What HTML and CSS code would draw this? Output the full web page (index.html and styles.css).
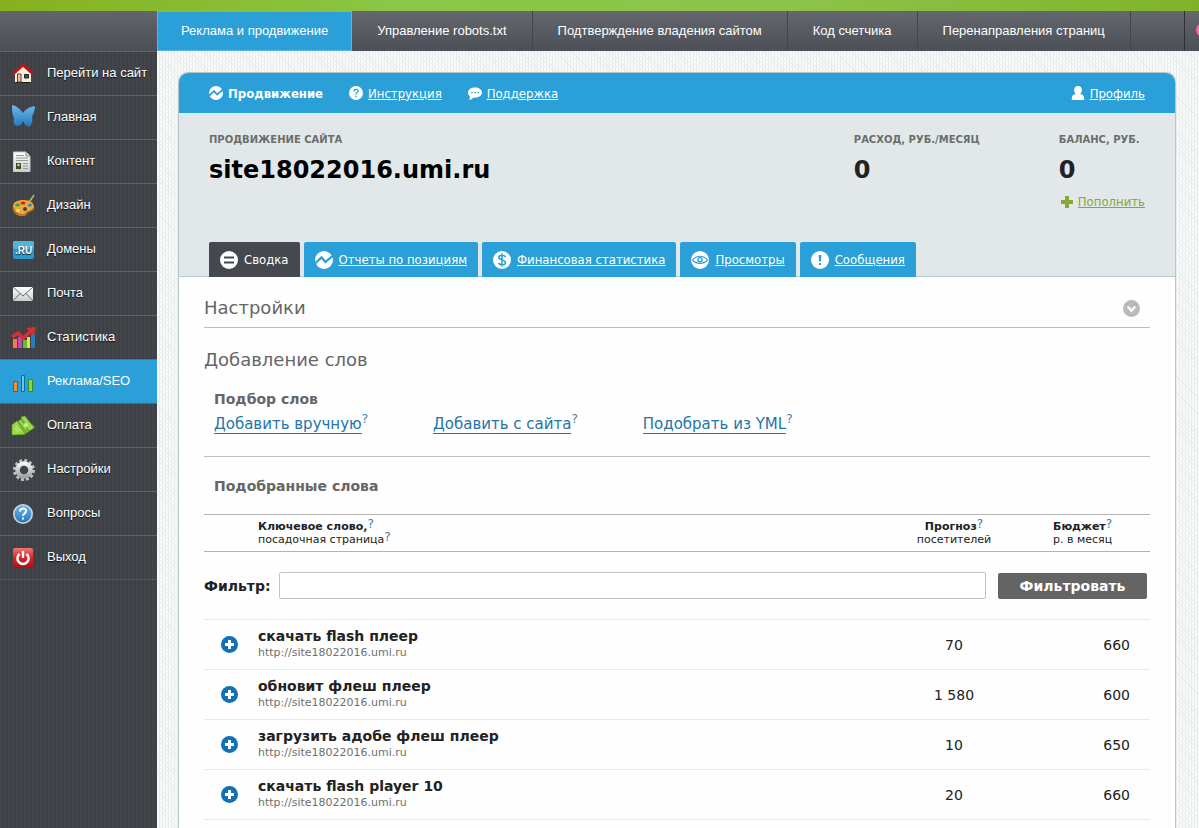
FILE: index.html
```html
<!DOCTYPE html>
<html lang="ru">
<head>
<meta charset="utf-8">
<title>Реклама и продвижение</title>
<link rel="stylesheet" href="styles.css">
</head>
<body>
<svg class="defs" aria-hidden="true">
  <defs>
    <linearGradient id="sky" x1="0" y1="0" x2="0" y2="1"><stop offset="0" stop-color="#6db9ee"/><stop offset="1" stop-color="#2277b8"/></linearGradient>
    <linearGradient id="paper" x1="0" y1="0" x2="0" y2="1"><stop offset="0" stop-color="#ffffff"/><stop offset="1" stop-color="#c9cfca"/></linearGradient>
    <linearGradient id="steel" x1="0" y1="0" x2="0" y2="1"><stop offset="0" stop-color="#f4f4f4"/><stop offset="1" stop-color="#a0a3a5"/></linearGradient>
    <linearGradient id="red" x1="0" y1="0" x2="0" y2="1"><stop offset="0" stop-color="#ee7773"/><stop offset="0.5" stop-color="#d62426"/><stop offset="1" stop-color="#b50d12"/></linearGradient>
    <symbol id="trend" viewBox="0 0 18 18"><circle cx="9" cy="9" r="9" fill="#fff"/><path d="M0 12.500 6.500 6.500 10.500 11 18 4.500" fill="none" stroke="#2a9fd8" stroke-width="2.300"/></symbol>
  </defs>
</svg>
<div class="strip"></div>
<div class="shell">
  <nav class="side" aria-label="Разделы">
    <div class="side-top"></div>
    <a href="#" class="side-link"><svg viewBox="0 0 24 24"><path d="M4 12v9h16v-9l-8-7z" fill="#f6efdc"/><path d="M5 21.500h14" stroke="#15181a" stroke-width="1"/><path d="M2 13 12 4l10 9" fill="none" stroke="#be151d" stroke-width="3"/><path d="M6.500 13h3.500v8H6.500z" fill="#e8c49d" stroke="#6a3c28"/><path d="M13.500 13.500h4v3.500h-4z" fill="#2c5a82" stroke="#222"/></svg>Перейти на сайт</a>
    <a href="#" class="side-link"><svg viewBox="0 0 24 24"><path d="M1 0c5 1 8 4 11 8 3-4 6-6 12-7 0 5-2 8-3 11 1 3 0 6-1 8-1 2-3 2-4 1-2-1-3-3-4-5-1 3-3 5-5 5-4 0-5-3-4-8C1 9 1 5 1 0z" fill="url(#sky)"/></svg>Главная</a>
    <a href="#" class="side-link"><svg viewBox="0 0 24 24"><path d="M2.500 3H15l4 4v15.500H2.500z" fill="url(#paper)" stroke="#ccc"/><path d="M15 3v4h4" fill="#ddd" stroke="#888"/><path d="M5 6.500h8M5 9h12M5 11.500h12M12 14.500h5M12 17h5M12 19.500h5" stroke="#9b9b9b"/><path d="M5 14h5v6H5z" fill="#3e4d22"/><circle cx="7.500" cy="16" r="1.300" fill="#d5c48a"/></svg>Контент</a>
    <a href="#" class="side-link"><svg viewBox="0 0 24 24"><path d="M13 7c6 0 10 3 10 7s-4 4-6 5 0 4-6 4C5 23 2 19 2 14s4-7 11-7z" fill="#eea83f"/><path d="M2 14c1 5 4 8 9 8 4 0 4-2 6-3s5-1 6-4" fill="none" stroke="#b8691b" stroke-width="1.500"/><ellipse cx="6.500" cy="12" rx="2.500" ry="1.600" fill="#3da639"/><ellipse cx="12" cy="10" rx="2.500" ry="1.500" fill="#c42d1c"/><ellipse cx="18.500" cy="12" rx="2.300" ry="1.500" fill="#2f7fb8"/><ellipse cx="7" cy="17.500" rx="2.200" ry="1.600" fill="#f9dd55"/><circle cx="14" cy="16" r="2" fill="#45464a"/><path d="m15 14 8-12" stroke="#cfae68" stroke-width="1.500"/></svg>Дизайн</a>
    <a href="#" class="side-link"><svg viewBox="0 0 24 24"><rect x="2" y="4" width="21" height="18" rx="2" fill="#2c98cb"/><rect x="2" y="4" width="21" height="8" rx="2" fill="#55b4dc"/><text x="12.500" y="17" text-anchor="middle" class="ru">.RU</text></svg>Домены</a>
    <a href="#" class="side-link"><svg viewBox="0 0 24 24"><path d="M2 6h20v14H2z" fill="url(#paper)"/><path d="m2 6 10 9L22 6M2 20l7.500-8M22 20l-7.500-8" fill="none" stroke="#62716e" stroke-width="1"/></svg>Почта</a>
    <a href="#" class="side-link"><svg viewBox="0 0 24 24"><path d="M2 14h4v9H2z" fill="#ef8140"/><path d="M7 12h4v11H7z" fill="#cc43bb"/><path d="M12 15h4v8h-4z" fill="#62bf37"/><path d="M16 12h3v11h-3z" fill="#f4da47"/><path d="M20 9h4v14h-4z" fill="#247fb7"/><path d="m1 12 6-4 5 5 8-7" fill="none" stroke="#dc2d32" stroke-width="3.500"/><path d="m15 3 10-1-2 9z" fill="#dc2d32"/></svg>Статистика</a>
    <a href="#" class="side-link active" aria-current="page"><svg viewBox="0 0 24 24"><path d="M2.500 12.500h4v10h-4z" fill="#f48d2f" stroke="#944d1c"/><path d="M10.500 6.500h3v16h-3z" fill="#5fc8f2" stroke="#156796"/><path d="M17.500 10.500h4v12h-4z" fill="#85d943" stroke="#3b8922"/></svg>Реклама/SEO</a>
    <a href="#" class="side-link"><svg viewBox="0 0 24 24"><path d="m1 12 12-8 11 10-11 8H1z" fill="#75b929"/><path d="m1 12 5-4 8 13-13 1zM10 4l4-1 9 12-5 3z" fill="#9bd94c" stroke="#5f9d22" stroke-width=".7"/><circle cx="15" cy="12" r="2" fill="#c9f38c"/><path d="m5 13 4 5M4 15l3 4M9 8l6 8" stroke="#d0ef9a"/></svg>Оплата</a>
    <a href="#" class="side-link"><svg viewBox="0 0 24 24"><circle cx="13" cy="13" r="9.500" fill="none" stroke="#bfc1c2" stroke-width="3" stroke-dasharray="2.900 2.070"/><circle cx="13" cy="13" r="6.500" fill="none" stroke="url(#steel)" stroke-width="4.500"/></svg>Настройки</a>
    <a href="#" class="side-link"><svg viewBox="0 0 24 24"><circle cx="12" cy="13" r="9.200" fill="url(#sky)" stroke="#c9d6df" stroke-width="1.600"/><path d="M9 10.500c0-4 6-4 6-.5 0 2.500-3 2.200-3 5M12 16.500v2" fill="none" stroke="#fff" stroke-width="2"/></svg>Вопросы</a>
    <a href="#" class="side-link"><svg viewBox="0 0 24 24"><rect x="2" y="3" width="20" height="20" rx="2" fill="url(#red)"/><path d="M8.500 9a5.600 5.600 0 1 0 7 0M12 6v7" fill="none" stroke="#fff" stroke-width="2.400"/></svg>Выход</a>
  </nav>
  <div class="page">
    <nav class="top" aria-label="Модули">
      <a href="#" class="top-link active" aria-current="page">Реклама и продвижение</a>
      <a href="#" class="top-link">Управление robots.txt</a>
      <a href="#" class="top-link">Подтверждение владения сайтом</a>
      <a href="#" class="top-link">Код счетчика</a>
      <a href="#" class="top-link">Перенаправления страниц</a>
      <span class="top-rest"></span>
      <span class="top-end"><i></i></span>
    </nav>
    <main class="card">
      <header class="bar">
        <strong><svg viewBox="0 0 18 18"><use href="#trend"/></svg>Продвижение</strong>
        <a href="#"><svg viewBox="0 0 18 18"><circle cx="9" cy="9" r="9" fill="#fff"/><path d="M6.500 7c0-3.500 5.200-3.500 5.200-.5 0 2-2.700 2-2.700 4.500M9 12.500v2" fill="none" stroke="#2a9fd8" stroke-width="1.700"/></svg><span>Инструкция</span></a>
        <a href="#"><svg viewBox="0 0 18 18"><path d="M9 2c5 0 9 2.700 9 6.500S14 15 9 15l-2-.2C5 17 3 18 1 17.500c1-1 1.500-2.500 1.500-4C1 12.300 0 10.500 0 8.500 0 4.700 4 2 9 2z" fill="#fff"/><path d="M4 8.500h2m2 0h2m2 0h2" stroke="#2a9fd8" stroke-width="1.800"/></svg><span>Поддержка</span></a>
        <a href="#" class="profile"><svg viewBox="0 0 18 18"><path d="M9 0c3 0 5 2 5 5 0 2-1 4-2 5l1 1c3 0 4 2 4 7H1c0-5 1-7 4-7l1-1C5 9 4 7 4 5c0-3 2-5 5-5z" fill="#fff"/></svg><span>Профиль</span></a>
      </header>
      <section class="summary">
        <div class="stats">
          <div class="site"><div class="cap">ПРОДВИЖЕНИЕ САЙТА</div><h1>site18022016.umi.ru</h1></div>
          <div class="cost"><div class="cap">РАСХОД, РУБ./МЕСЯЦ</div><div class="num">0</div></div>
          <div class="balance"><div class="cap">БАЛАНС, РУБ.</div><div class="num">0</div>
            <a href="#" class="topup"><svg viewBox="0 0 12 12"><path d="M4 0h4v4h4v4H8v4H4V8H0V4h4z" fill="#86aa31"/></svg><span>Пополнить</span></a></div>
        </div>
        <nav class="tabs" aria-label="Отчеты">
          <a href="#" class="tab active" aria-current="page"><svg viewBox="0 0 18 18"><circle cx="9" cy="9" r="9" fill="#fff"/><path d="M4 6.500h10M4 11.500h10" stroke="#45484e" stroke-width="2.200"/></svg><span>Сводка</span></a>
          <a href="#" class="tab"><svg viewBox="0 0 18 18"><use href="#trend"/></svg><span>Отчеты по позициям</span></a>
          <a href="#" class="tab"><svg viewBox="0 0 18 18"><circle cx="9" cy="9" r="9" fill="#fff"/><path d="M12.500 6C11 3.500 5.800 3.800 5.800 6.500c0 3 6.700 1.800 6.700 5C12.500 14.500 7 14.500 5.500 12M9 2.500v13" fill="none" stroke="#2a9fd8" stroke-width="1.500"/></svg><span>Финансовая статистика</span></a>
          <a href="#" class="tab"><svg viewBox="0 0 18 18"><circle cx="9" cy="9" r="9" fill="#fff"/><path d="M1.500 9c4-5 11-5 15 0-4 4.500-11 4.500-15 0z" fill="#fff" stroke="#2a9fd8" stroke-width="1.200"/><circle cx="9" cy="8.700" r="2.100" fill="none" stroke="#2a9fd8" stroke-width="1.400"/></svg><span>Просмотры</span></a>
          <a href="#" class="tab"><svg viewBox="0 0 18 18"><circle cx="9" cy="9" r="9" fill="#fff"/><path d="M7.600 4h2.800l-.5 6.500H8.100zM8 12h2v2H8z" fill="#2a9fd8"/></svg><span>Сообщения</span></a>
        </nav>
      </section>
      <div class="content">
        <div class="fold">
          <h2>Настройки</h2>
          <button type="button" aria-label="Развернуть"><svg viewBox="0 0 18 18"><circle cx="9" cy="9" r="9" fill="#bababa"/><path d="m5 7 4 4.500L13 7" fill="none" stroke="#fff" stroke-width="2.400"/></svg></button>
        </div>
        <section class="adding">
          <h2>Добавление слов</h2>
          <h3>Подбор слов</h3>
          <div class="ways">
            <span class="way"><a href="#">Добавить вручную</a><sup>?</sup></span>
            <span class="way"><a href="#">Добавить с сайта</a><sup>?</sup></span>
            <span class="way"><a href="#">Подобрать из YML</a><sup>?</sup></span>
          </div>
        </section>
        <h3 class="picked">Подобранные слова</h3>
        <table>
          <thead>
            <tr><th class="pick"></th><th class="word"><b>Ключевое слово,</b><sup>?</sup><br>посадочная страница<sup>?</sup></th><th class="visits"><b>Прогноз</b><sup>?</sup><br>посетителей</th><th class="budget"><b>Бюджет</b><sup>?</sup><br>р. в месяц</th></tr>
          </thead>
          <tbody>
            <tr><td colspan="4" class="filter-cell"><form class="filter"><label for="filter">Фильтр:</label><input id="filter" type="text"><button type="button">Фильтровать</button></form></td></tr>
            <tr class="row"><td class="pick"><button type="button" class="plus" aria-label="Добавить"></button></td><td class="phrase"><b>скачать flash плеер</b><small>http://site18022016.umi.ru</small></td><td class="visits">70</td><td class="budget">660</td></tr>
            <tr class="row"><td class="pick"><button type="button" class="plus" aria-label="Добавить"></button></td><td class="phrase"><b>обновит флеш плеер</b><small>http://site18022016.umi.ru</small></td><td class="visits">1 580</td><td class="budget">600</td></tr>
            <tr class="row"><td class="pick"><button type="button" class="plus" aria-label="Добавить"></button></td><td class="phrase"><b>загрузить адобе флеш плеер</b><small>http://site18022016.umi.ru</small></td><td class="visits">10</td><td class="budget">650</td></tr>
            <tr class="row"><td class="pick"><button type="button" class="plus" aria-label="Добавить"></button></td><td class="phrase"><b>скачать flash player 10</b><small>http://site18022016.umi.ru</small></td><td class="visits">20</td><td class="budget">660</td></tr>
          </tbody>
        </table>
      </div>
    </main>
  </div>
</div>
</body>
</html>
```
FILE: styles.css
```css
* { box-sizing: border-box; }
body {
  margin: 0;
  min-height: 100vh;
  display: flex;
  flex-direction: column;
  font-family: Verdana, "DejaVu Sans", sans-serif;
  font-size: 12px;
  color: #222;
}
h1, h2, h3 { margin: 0; }
a { color: inherit; }
button { padding: 0; border: 0; background: none; font: inherit; cursor: pointer; }
svg { display: block; flex: none; }
.defs { position: absolute; width: 0; height: 0; }

.strip { height: 11px; background: linear-gradient(90deg, #86b11f, #8bc645 33%, #8cc44a 66%, #7fb429); }
.shell { flex: 1; display: flex; }

.side {
  width: 157px;
  flex: none;
  background: repeating-linear-gradient(90deg, #42464a 0 2px, #3d4145 2px 4px);
  font: 13px/16px "Liberation Sans", Arial, sans-serif;
}
.side-top { height: 40px; background: linear-gradient(#62656b, #4b4e54); }
.side-link {
  display: flex;
  align-items: center;
  gap: 12px;
  height: 44px;
  padding: 0 0 2px 11px;
  border-top: 1px solid #5f6467;
  color: #fff;
  text-decoration: none;
  text-shadow: 0 1px 1px #111;
}
.side-link svg { width: 24px; height: 24px; overflow: visible; }
.side-link.active { background: #2a9fd8; border-color: #2585b4; text-shadow: none; }
.side-link:last-child { height: 45px; border-bottom: 1px solid #55595c; }
.ru { font: bold 10px "Liberation Sans", Arial, sans-serif; fill: #fff; }

.page {
  flex: 1;
  min-width: 0;
  display: flex;
  flex-direction: column;
  background:
    repeating-linear-gradient(45deg, transparent 0 2px, #dfe3e366 2px 3px),
    repeating-linear-gradient(90deg, #f9fafa 0 2px, #eceeee 2px 3px);
}
.top {
  display: flex;
  height: 40px;
  background: linear-gradient(#64676d, #4c4f55);
  font: 13px/39px "Liberation Sans", Arial, sans-serif;
}
.top-link {
  padding: 0 25px;
  border-right: 1px solid #43464b;
  color: #fff;
  text-decoration: none;
  white-space: nowrap;
}
.top-link.active { padding: 0 23px; background: #2a9fd8; border: 1px solid #5cb5e0; line-height: 37px; }
.top-rest { flex: 1; }
.top-end { width: 15px; border-left: 1px solid #2d3035; overflow: hidden; padding: 12px 0 0 11px; }
.top-end i { display: block; width: 14px; height: 14px; border-radius: 50%; background: #f2699f; }

.card {
  flex: 1;
  margin: 21px 23px 0 21px;
  border: 1px solid #b9c6c8;
  border-bottom: 0;
  border-radius: 10px 10px 0 0;
  background: #fdfefd;
  overflow: hidden;
}
.bar {
  display: flex;
  align-items: center;
  gap: 26px;
  height: 40px;
  padding: 0 30px;
  background: #2a9fd8;
  color: #fff;
}
.bar, .tab, .topup { font-family: Tahoma, "DejaVu Sans Condensed", sans-serif; font-size: 13px; }
.bar strong, .bar a { display: flex; align-items: center; gap: 5px; text-decoration: none; }
.bar span, .tab span, .topup span { text-decoration: underline; }
.bar svg { width: 14px; height: 14px; }
.bar .profile { margin-left: auto; }

.summary {
  display: flex;
  flex-direction: column;
  justify-content: space-between;
  height: 164px;
  padding: 19px 30px 0;
  border-top: 2px solid #d4eff9;
  border-bottom: 1px solid #b3cfd6;
  background: #e2e8ea;
}
.stats { display: flex; }
.site { flex: 1; }
.cost { padding-right: 79px; }
.balance { min-width: 86px; }
.cap { font-size: 10px; line-height: 12px; font-weight: bold; color: #6b6d6b; }
.stats h1, .num { margin-top: 9px; font-size: 24px; line-height: 30px; font-weight: bold; color: #000; }
.num { color: #222; }
.topup { display: flex; align-items: center; gap: 5px; margin-top: 9px; line-height: 16px; color: #86aa31; text-decoration: none; }
.topup svg { width: 12px; height: 12px; margin-left: 2px; }
.tabs { display: flex; gap: 4px; margin-bottom: -1px; }
.tab {
  display: flex;
  align-items: center;
  gap: 6px;
  height: 35px;
  padding: 0 11px;
  border-radius: 2px 2px 0 0;
  background: #2a9fd8;
  color: #fff;
  text-decoration: none;
  white-space: nowrap;
}
.tab svg { width: 18px; height: 18px; }
.tab.active { background: #45484e; }
.tab.active span { text-decoration: none; }

.content { padding: 0 25px; }
h2 { font-size: 18px; line-height: 24px; font-weight: normal; color: #666; }
h3 { font-size: 14px; line-height: 18px; color: #666; }
.fold {
  display: flex;
  align-items: center;
  justify-content: space-between;
  height: 51px;
  padding: 12px 10px 0 0;
  border-bottom: 1px solid #bcbcbc;
}
.fold svg { width: 17px; height: 17px; }
.adding { padding: 20px 0 21px; border-bottom: 1px solid #bcc0c4; }
.adding h3 { margin: 18px 0 6px 10px; }
.ways { display: flex; gap: 65px; margin-left: 10px; font-size: 15px; line-height: 21px; }
.ways a { color: #2374ab; text-decoration: none; border-bottom: 1px solid #2374ab; }
sup { font-size: 12px; line-height: 0; vertical-align: 6px; color: #3a7fae; }
.picked { margin: 20px 0 19px 10px; }

table { width: 100%; border-collapse: collapse; table-layout: fixed; }
td, th { padding: 0; }
th {
  height: 37px;
  border-top: 1px solid #b3b3b3;
  border-bottom: 1px solid #b3b3b3;
  font-size: 11px;
  line-height: 13px;
  font-weight: normal;
  text-align: left;
}
th sup { vertical-align: 2px; }
.pick { width: 54px; }
.visits { width: 120px; text-align: center; }
.budget { width: 136px; padding-right: 20px; text-align: right; }
th.budget { padding: 0 0 0 39px; text-align: left; }
.filter { display: flex; align-items: center; height: 67px; padding-right: 3px; font-size: 14px; font-weight: bold; }
.filter input {
  flex: 1;
  min-width: 0;
  height: 27px;
  margin: 0 12px 0 8px;
  border: 1px solid #c3c3c8;
  border-radius: 2px;
  background: #fff;
  font: inherit;
}
.filter button { width: 149px; height: 26px; border-radius: 2px; background: #646464; color: #fff; }
.row td { height: 50px; border-top: 1px solid #e8e8e8; border-bottom: 1px solid #e8e8e8; font-size: 14px; }
.row .phrase { padding-bottom: 2px; }
.row b { display: block; line-height: 18px; }
.row small { display: block; font-size: 11px; line-height: 16px; color: #707070; }
.plus {
  display: block;
  width: 17px;
  height: 17px;
  margin-left: 17px;
  border-radius: 50%;
  background:
    linear-gradient(#fff, #fff) center / 9px 3px no-repeat,
    linear-gradient(#fff, #fff) center / 3px 9px no-repeat,
    #1270b5;
}
```
